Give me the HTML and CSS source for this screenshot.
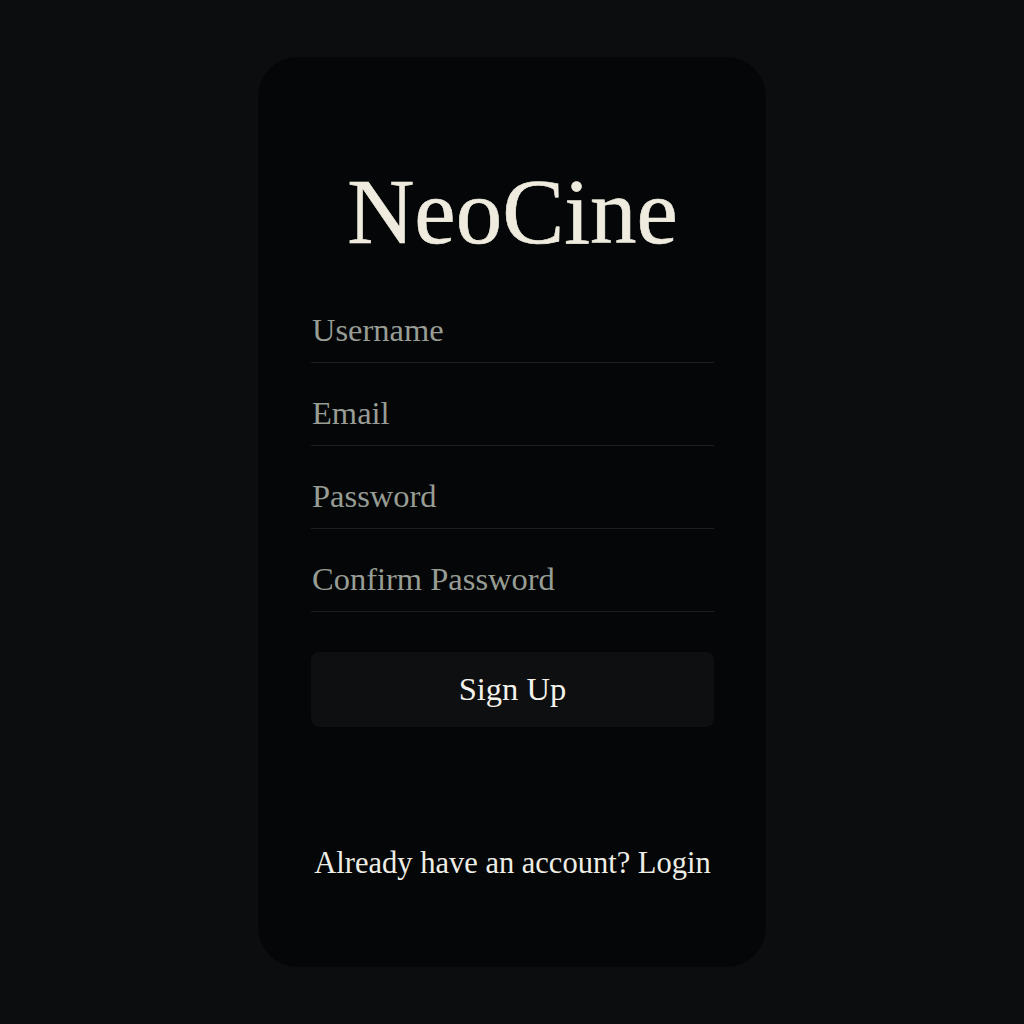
FILE: index.html
```html
<!DOCTYPE html>
<html lang="en">
<head>
<meta charset="utf-8">
<title>NeoCine — Sign Up</title>
<link rel="stylesheet" href="styles.css">
</head>
<body>
  <main class="card">
    <h1 class="title">NeoCine</h1>
    <form class="form">
      <label class="field"><input class="input" type="text" placeholder="Username"></label>
      <label class="field"><input class="input" type="email" placeholder="Email"></label>
      <label class="field"><input class="input" type="password" placeholder="Password"></label>
      <label class="field"><input class="input" type="password" placeholder="Confirm Password"></label>
      <button class="btn" type="button">Sign Up</button>
    </form>
    <p class="footer">Already have an account? <a class="link" href="#">Login</a></p>
  </main>
</body>
</html>
```
FILE: styles.css
```css
html, body {
  margin: 0;
  padding: 0;
}
body {
  background: #0b0d0f;
  min-height: 1024px;
  box-sizing: border-box;
  padding-top: 57px;
  display: flex;
  justify-content: center;
  align-items: flex-start;
  font-family: "Liberation Serif", "DejaVu Serif", serif;
}
.card {
  width: 508px;
  height: 910px;
  box-sizing: border-box;
  padding: 0 52px 0 53px;
  background: #040607;
  border-radius: 40px;
  display: flex;
  flex-direction: column;
}
.title {
  margin: 109px 0 0;
  font-size: 93px;
  line-height: 92px;
  font-weight: 400;
  text-align: center;
  color: #efecdf;
  -webkit-text-stroke: 0.6px #efecdf;
}
.form {
  margin-top: 22px;
  display: flex;
  flex-direction: column;
}
.field {
  display: block;
  border-bottom: 1px solid #1b1f21;
  padding: 30px 0 12px;
}
.input {
  display: block;
  width: 100%;
  height: 40px;
  padding: 0;
  margin: 0 0 0 1px;
  border: none;
  outline: none;
  background: transparent;
  font-family: inherit;
  font-size: 32.5px;
  line-height: 40px;
  color: #e9e7dc;
}
.input::placeholder {
  color: #979c94;
  opacity: 1;
}
.btn {
  margin-top: 40px;
  height: 75px;
  border: none;
  border-radius: 8px;
  background: #0d0f10;
  color: #f4f2ea;
  font-family: inherit;
  font-size: 32.5px;
  line-height: 75px;
  padding: 0;
  cursor: pointer;
}
.footer {
  margin: 118px 0 0;
  font-size: 30.5px;
  line-height: 36px;
  text-align: center;
  color: #eeede5;
}
.link {
  color: inherit;
  text-decoration: none;
}
```
